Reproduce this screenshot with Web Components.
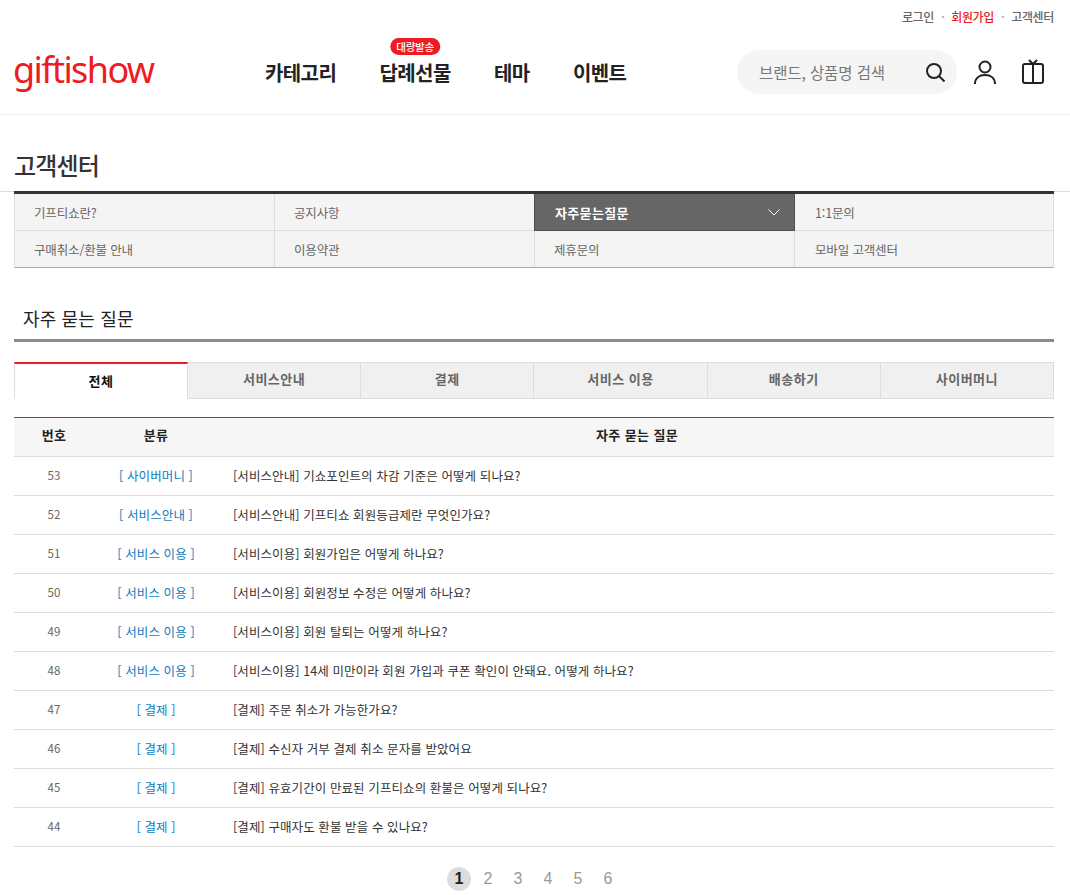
<!DOCTYPE html>
<html lang="ko"><head><meta charset="utf-8"><title>고객센터</title>
<style>
html,body{margin:0;padding:0;background:#fff;font-family:"Noto Sans CJK KR","Noto Sans",sans-serif;font-size:12px;color:#333}
html{overflow:hidden}
</style></head><body>
<gs-header></gs-header>
<gs-title>고객센터</gs-title>
<gs-menu></gs-menu>
<gs-heading>자주 묻는 질문</gs-heading>
<gs-tabs></gs-tabs>
<gs-faq></gs-faq>
<gs-pager></gs-pager>
<script>
function def(name,html){customElements.define(name,class extends HTMLElement{constructor(){super();this.attachShadow({mode:'open'}).innerHTML=html}})}

def('gs-header',`<style>
:host{display:block;height:115px;box-sizing:border-box;border-bottom:1px solid #eee}
.util{height:50px;box-sizing:border-box;padding:9px 16px 0 0;display:flex;justify-content:flex-end;gap:7px;font-size:12px;line-height:15px;letter-spacing:-.35px;color:#666;font-weight:500}
.util .r{color:#ed1c24}.util i{font-style:normal;color:#aaa}
.main{display:grid;grid-template-columns:251px 1fr auto;height:44px;padding-left:14px;align-items:center}
.logo{font:400 36px/44px "Noto Sans",sans-serif;color:#ed1c24;letter-spacing:-1.6px;margin:-5px 0 0 -1px}
nav{display:flex;gap:43.3px;font-size:20px;font-weight:700;color:#222;letter-spacing:-.6px;height:44px;line-height:46px}
nav span{position:relative;display:block}
.badge{position:absolute;left:50%;top:-12px;transform:translateX(-50%);background:#ed1c24;color:#fff;border-radius:9px;height:17px;line-height:17px;padding:0 6px;font-size:10.5px;font-weight:500;white-space:nowrap;letter-spacing:-.3px}
.right{display:flex;align-items:center}
.search{width:220px;height:44px;border-radius:22px;background:#f5f5f5;box-sizing:border-box;padding:0 12px 0 22px;display:flex;align-items:center;justify-content:space-between;font-size:15.500px;color:#777;letter-spacing:-.1px}
svg{display:block;fill:none;stroke:#222;stroke-width:2}
.user{margin-left:16px}.gift{margin-left:24px;margin-right:25px}
</style>
<div class="util"><span>로그인</span><i>·</i><span class="r">회원가입</span><i>·</i><span>고객센터</span></div>
<div class="main">
<div class="logo">giftishow</div>
<nav><span>카테고리</span><span>답례선물<b class="badge">대량발송</b></span><span>테마</span><span>이벤트</span></nav>
<div class="right"><div class="search"><span>브랜드, 상품명 검색</span>
<svg width="20" height="20" viewBox="0 0 20 20"><circle cx="9" cy="9" r="7"/><path d="M14 14l5.500 5.500"/></svg></div>
<svg class="user" width="24" height="26" viewBox="0 0 24 26"><circle cx="12" cy="8" r="5.500"/><path d="M2 25c0-6 4.500-9 10-9s10 3 10 9"/></svg>
<svg class="gift" width="24" height="26" viewBox="0 0 24 26"><rect x="2" y="5" width="20" height="19" rx="2"/><path d="M12 5v19M8 1l4 4 4-4"/></svg>
</div></div>`);

def('gs-title',`<style>:host{display:block;height:77px;box-sizing:border-box;border-bottom:1px solid #ddd;padding:32px 0 0 14px;font-size:24px;line-height:36px;color:#333;font-weight:500;letter-spacing:-.8px}</style><slot></slot>`);

def('gs-menu',`<style>
:host{display:block;margin:-1px 16px 0 14px;border-top:3px solid #333}
.g{display:grid;grid-template-columns:260px 260px 260px 258px;background:#f4f4f4;border-left:1px solid #ddd;border-right:1px solid #ddd;border-bottom:1px solid #aaa;box-sizing:border-box}
.c{height:37px;box-sizing:border-box;border-right:1px solid #ddd;border-bottom:1px solid #ddd;padding-left:19px;line-height:37px;font-size:12.5px;color:#666;letter-spacing:-.15px;display:flex;justify-content:space-between;align-items:center}
.c:nth-child(4n){border-right:0;padding-left:20px}.c:nth-child(n+5){border-bottom:0;height:36px}
.on{background:#666;color:#fff;font-weight:700;font-size:13px;letter-spacing:.35px;border:1px solid #4d4d4d;border-top:0;padding-right:14px;margin-left:-1px;padding-left:20px}
svg{fill:none;stroke:#fff;stroke-width:1}
</style><div class="g">
<div class="c">기프티쇼란?</div><div class="c">공지사항</div><div class="c on">자주묻는질문<svg width="12" height="7" viewBox="0 0 12 7"><path d="M.5.5L6 6 11.500.5"/></svg></div><div class="c">1:1문의</div>
<div class="c">구매취소/환불 안내</div><div class="c">이용약관</div><div class="c">제휴문의</div><div class="c">모바일 고객센터</div>
</div>`);

def('gs-heading',`<style>:host{display:block;margin:0 16px 0 14px;height:74px;box-sizing:border-box;padding:36px 0 0 9px;border-bottom:3px solid #8c8c8c;font-size:18px;line-height:28px;color:#222;font-weight:400;letter-spacing:.15px}</style><slot></slot>`);

def('gs-tabs',`<style>
:host{display:grid;grid-template-columns:174px repeat(5,1fr);margin:20px 16px 0 14px;height:37px;font-size:13px;font-weight:700;color:#666}
div{display:flex;align-items:center;justify-content:center;background:#f0f0f0;border:1px solid #ddd;border-width:1px 1px 1px 0;box-sizing:border-box;letter-spacing:.5px;padding-bottom:5px}
.on{background:#fff;color:#111;border-top:2px solid #ed1c24;border-left:1px solid #ddd;border-bottom:0;padding-bottom:3px}
</style><div class="on">전체</div><div>서비스안내</div><div>결제</div><div>서비스 이용</div><div>배송하기</div><div>사이버머니</div>`);

const ROWS=[[53,'사이버머니','[서비스안내] 기쇼포인트의 차감 기준은 어떻게 되나요?'],[52,'서비스안내','[서비스안내] 기프티쇼 회원등급제란 무엇인가요?'],[51,'서비스 이용','[서비스이용] 회원가입은 어떻게 하나요?'],[50,'서비스 이용','[서비스이용] 회원정보 수정은 어떻게 하나요?'],[49,'서비스 이용','[서비스이용] 회원 탈퇴는 어떻게 하나요?'],[48,'서비스 이용','[서비스이용] 14세 미만이라 회원 가입과 쿠폰 확인이 안돼요. 어떻게 하나요?'],[47,'결제','[결제] 주문 취소가 가능한가요?'],[46,'결제','[결제] 수신자 거부 결제 취소 문자를 받았어요'],[45,'결제','[결제] 유효기간이 만료된 기프티쇼의 환불은 어떻게 되나요?'],[44,'결제','[결제] 구매자도 환불 받을 수 있나요?']];
def('gs-faq',`<style>
:host{display:block;margin:18px 16px 0 14px;border-top:1px solid #a8323a;font-size:12.5px}
.r{display:grid;grid-template-columns:80px 124px 1fr;height:39px;box-sizing:border-box;border-bottom:1px solid #ddd;align-items:center;padding-bottom:2px}
.h{background:#f6f6f6;font-weight:700;color:#222;text-align:center;letter-spacing:.4px;font-size:13px;padding-bottom:5px}
.h span:last-child{padding-left:2px}
.n{text-align:center;color:#666;font-size:11.5px}
.k{text-align:center;color:#0f7cbf;font-size:12.5px;letter-spacing:.1px}
.q{padding-left:15px;color:#333;letter-spacing:.09px}
</style><div class="r h"><span>번호</span><span>분류</span><span>자주 묻는 질문</span></div>`+
ROWS.map(r=>`<div class="r"><span class="n">${r[0]}</span><span class="k">[ ${r[1]} ]</span><span class="q">${r[2]}</span></div>`).join(''));

def('gs-pager',`<style>
:host{display:flex;justify-content:center;gap:6px;margin-top:20px;font:400 16px/24px "Liberation Sans",sans-serif;color:#999;padding-right:3px}
span{width:24px;height:24px;text-align:center;border-radius:50%}
.on{background:#ddd;color:#222;font-weight:700;margin-right:-1px}
</style><span class="on">1</span><span>2</span><span>3</span><span>4</span><span>5</span><span>6</span>`);
</script></body></html>
